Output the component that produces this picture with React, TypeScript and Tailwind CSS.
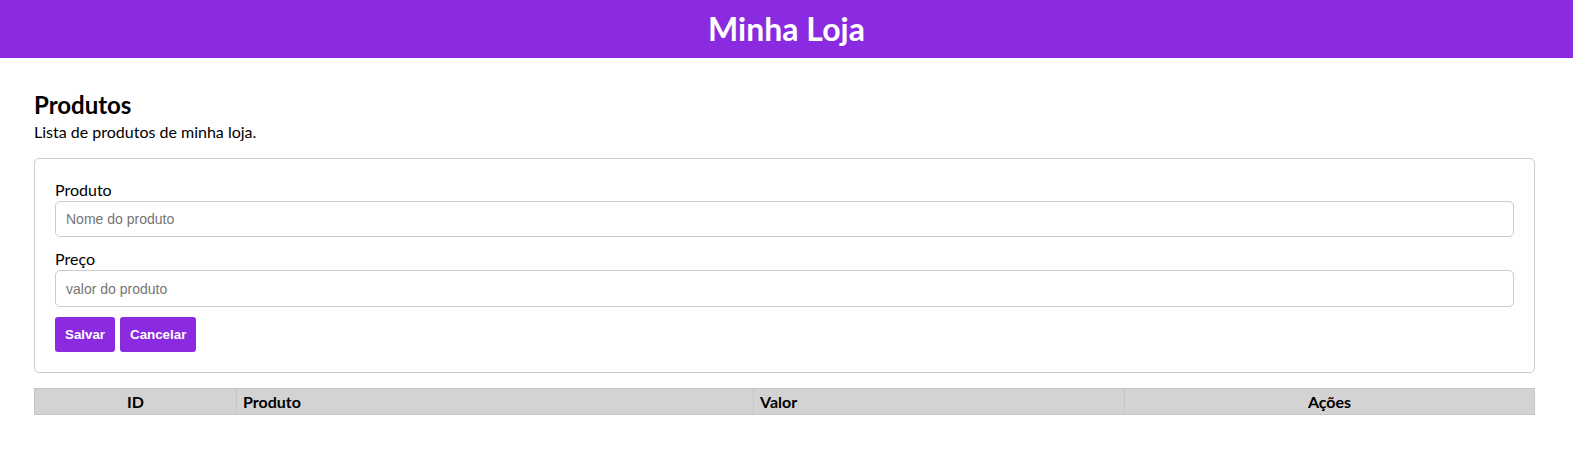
const font = { fontFamily: 'Lato, "Noto Sans", sans-serif' };

export default function App() {
  return (
    <div className="min-h-screen bg-white text-black font-['Lato','Noto_Sans',sans-serif]">
      <header className="flex h-[58px] items-center justify-center bg-[#8a2be2]">
        <h1 className="text-[32px] font-bold leading-none text-white">Minha Loja</h1>
      </header>

      <main className="pl-[34px] pr-[38px] pt-[33px]">
        <h2 className="text-[24px] font-bold leading-[28px]">Produtos</h2>
        <p className="mt-[2px] text-[16px] leading-[22px]">Lista de produtos de minha loja.</p>

        <form className="mt-[15px] rounded-[5px] border border-[#cccccc] px-[20px] pt-[20px] pb-[20px]">
          <label className="block text-[16px] leading-[22px]">Produto</label>
          <input
            placeholder="Nome do produto"
            className="block h-[36px] w-full rounded-[5px] border border-[#cccccc] px-[10px] font-['Liberation_Sans',Arial,sans-serif] text-[14px] placeholder:text-[#757575] outline-none"
          />
          <label className="mt-[11px] block text-[16px] leading-[22px]">Preço</label>
          <input
            placeholder="valor do produto"
            className="block h-[37px] w-full rounded-[5px] border border-[#cccccc] px-[10px] font-['Liberation_Sans',Arial,sans-serif] text-[14px] placeholder:text-[#757575] outline-none"
          />
          <div className="mt-[10px] flex gap-[5px]">
            <button
              type="button"
              className="h-[35px] rounded-[3px] bg-[#8a2be2] px-[10px] font-['Liberation_Sans',Arial,sans-serif] text-[13.33px] font-bold text-white"
            >
              Salvar
            </button>
            <button
              type="button"
              className="h-[35px] rounded-[3px] bg-[#8a2be2] px-[10px] font-['Liberation_Sans',Arial,sans-serif] text-[13.33px] font-bold text-white"
            >
              Cancelar
            </button>
          </div>
        </form>

        <table className="mt-[15px] w-full border-collapse bg-[#d3d3d3] text-[16px]" style={font}>
          <thead>
            <tr className="h-[26px]">
              <th className="w-[202px] border border-[#c6c6c6] text-center font-bold leading-none">ID</th>
              <th className="w-[517px] border border-[#c6c6c6] px-[6px] text-left font-bold leading-none">Produto</th>
              <th className="w-[371px] border border-[#c6c6c6] px-[6px] text-left font-bold leading-none">Valor</th>
              <th className="border border-[#c6c6c6] text-center font-bold leading-none">Ações</th>
            </tr>
          </thead>
          <tbody></tbody>
        </table>
      </main>
    </div>
  );
}
